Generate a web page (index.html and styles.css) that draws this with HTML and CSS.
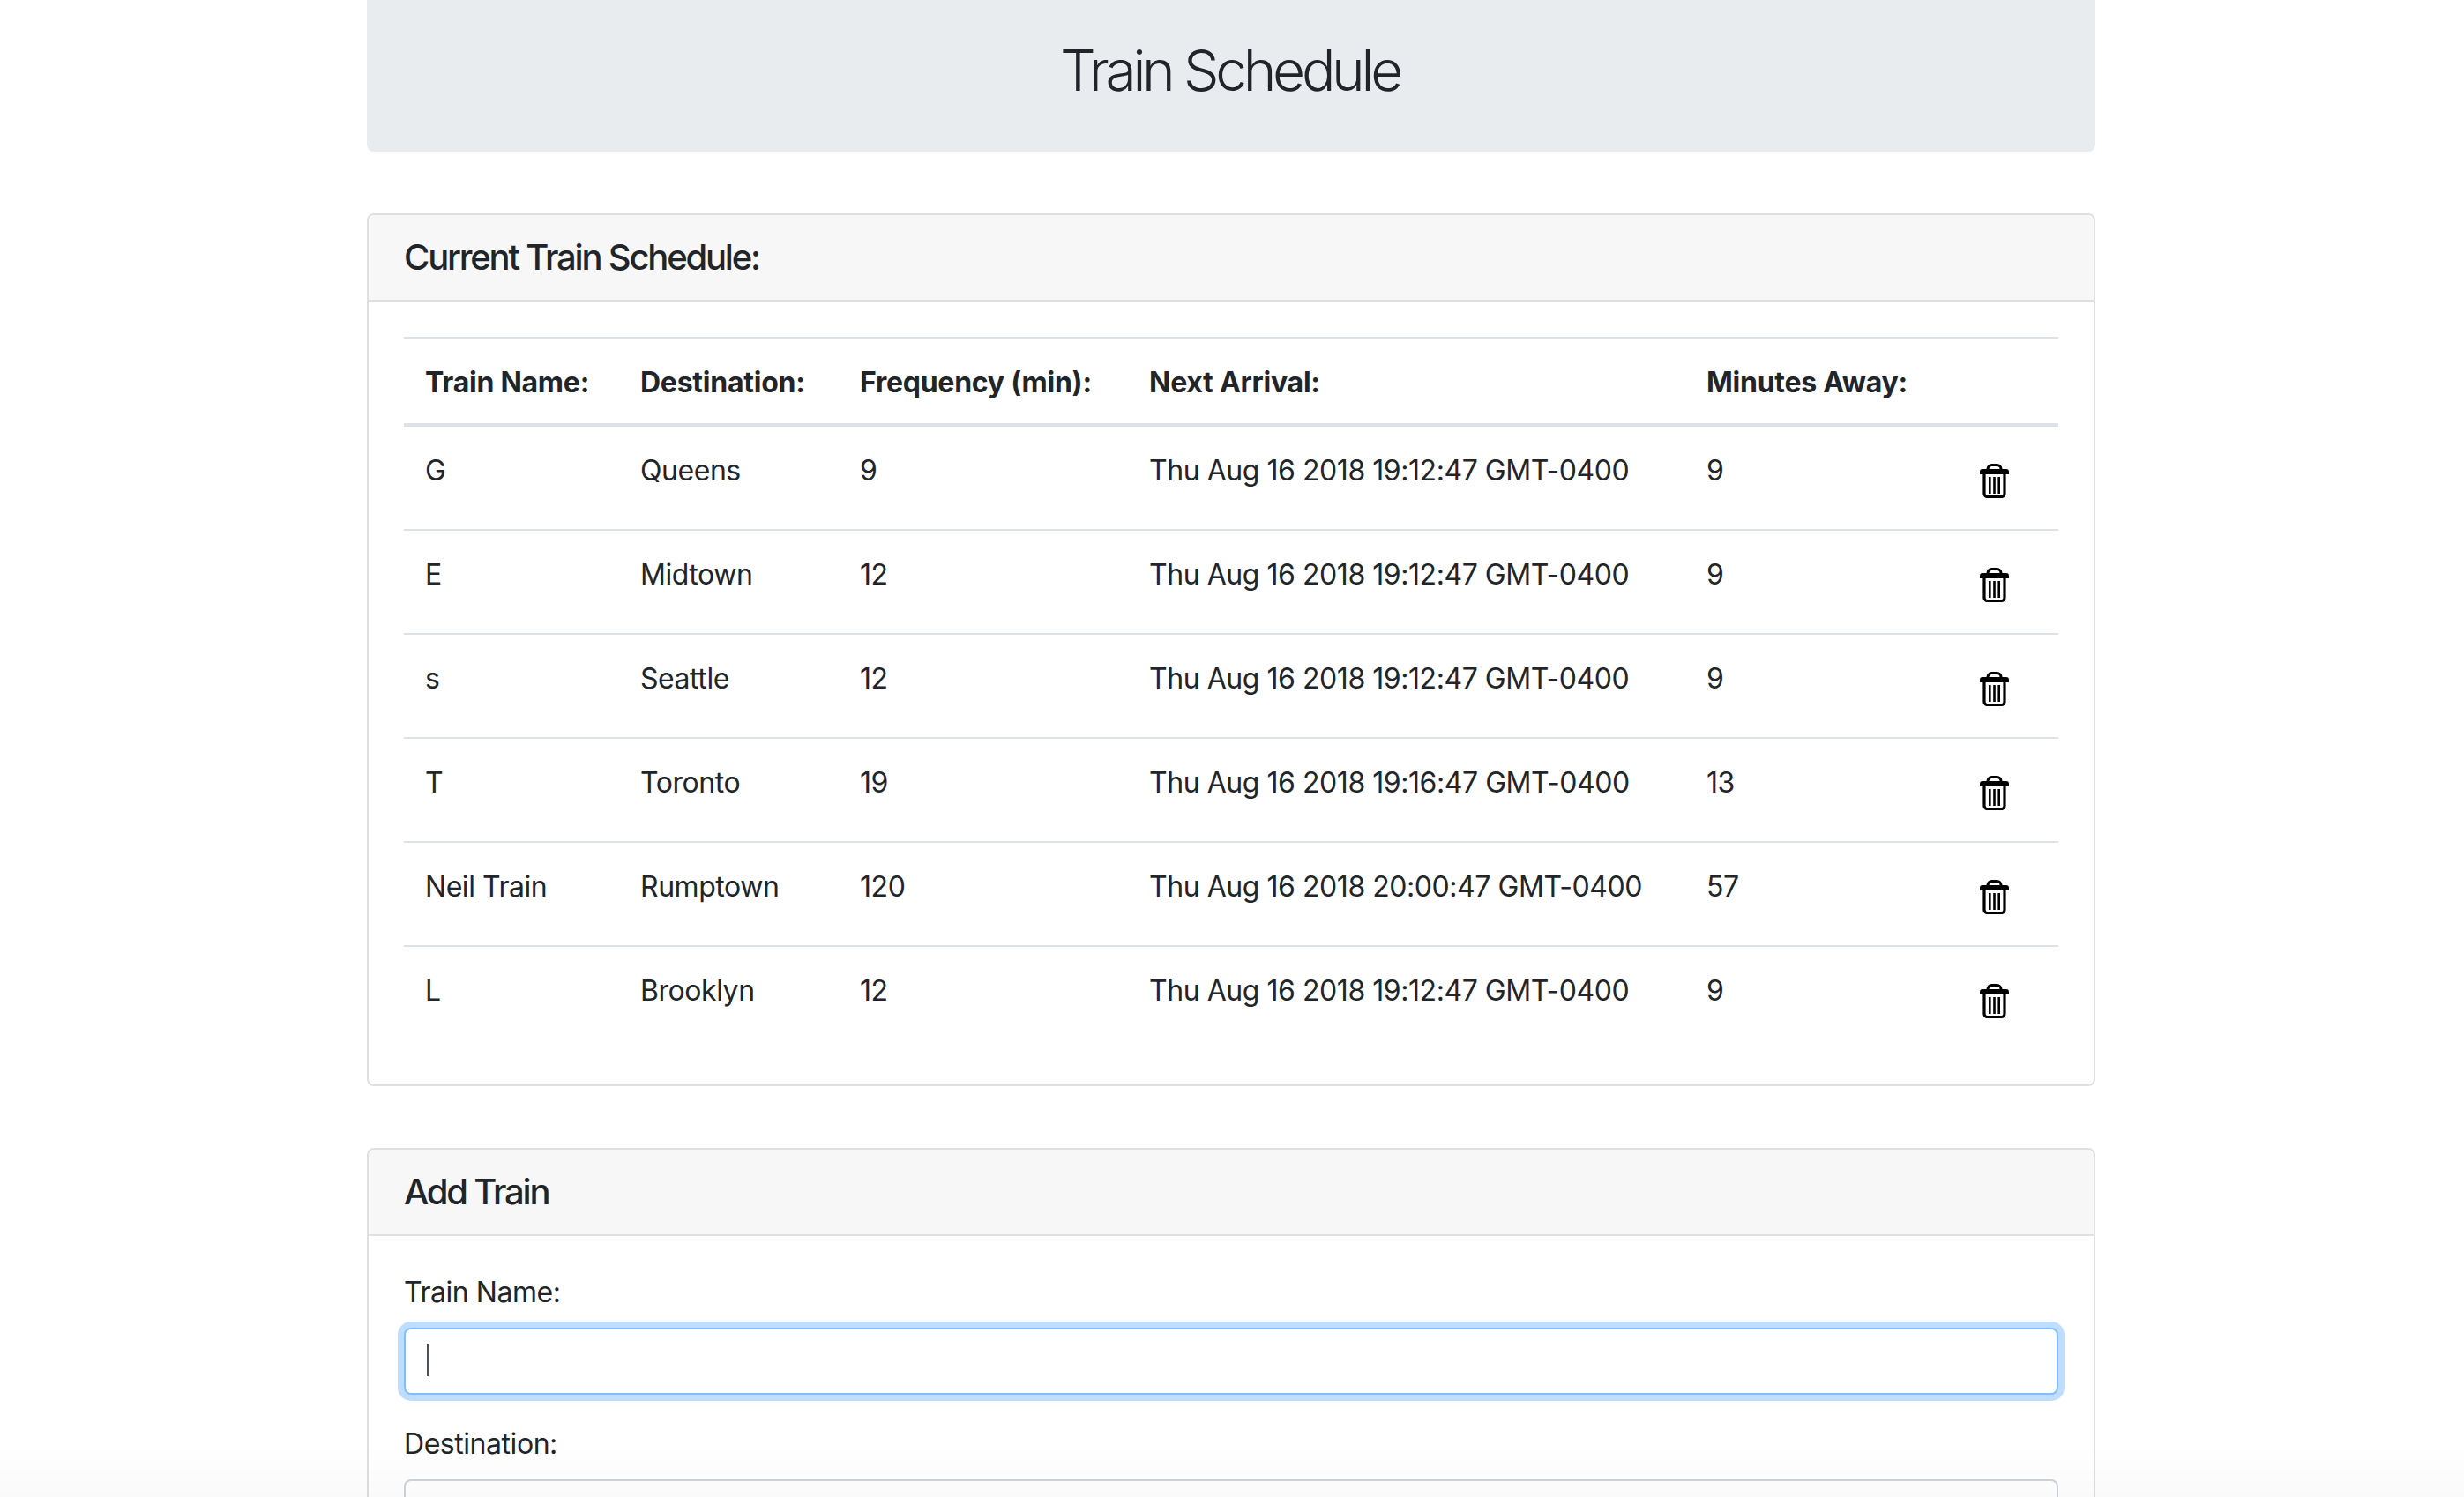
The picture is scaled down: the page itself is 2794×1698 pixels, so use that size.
FILE: index.html
```html
<!DOCTYPE html>
<html lang="en">
<head>
<meta charset="UTF-8" />
<title>Train Schedule</title>
<link rel="stylesheet" href="styles.css">
</head>
<body>

<svg class="sprite" width="0" height="0">
  <symbol id="trash" viewBox="0 0 33 39">
    <path d="M9 8V6a4.500 4.500 0 0 1 4.500-4.500h6A4.500 4.500 0 0 1 24 6v2" fill="none" stroke="currentColor" stroke-width="3" />
    <path d="M3 6h27a3 3 0 0 1 3 3v3H0V9a3 3 0 0 1 3-3z" fill="currentColor" />
    <path d="M5 11v23a3.500 3.500 0 0 0 3.500 3.500h16a3.500 3.500 0 0 0 3.500-3.500V11" fill="none" stroke="currentColor" stroke-width="3.200" />
    <path d="M10 15h2.600v19H10zM15.200 15h2.600v19h-2.600zM20.400 15h2.600v19h-2.600z" fill="currentColor" />
  </symbol>
</svg>

<div class="container">
  <div class="jumbotron">
    <h2>Train Schedule</h2>
  </div>

  <div class="card schedule">
    <h5 class="card-header">Current Train Schedule:</h5>
    <div class="card-body">
      <table>
        <thead>
          <tr>
            <th class="col-name">Train Name:</th>
            <th class="col-dest">Destination:</th>
            <th class="col-freq">Frequency (min):</th>
            <th class="col-next">Next Arrival:</th>
            <th class="col-away">Minutes Away:</th>
            <th></th>
          </tr>
        </thead>
        <tbody>
          <tr>
            <td>G</td><td>Queens</td><td>9</td><td>Thu Aug 16 2018 19:12:47 GMT-0400</td><td>9</td>
            <td class="trash-cell"><svg class="trash"><use href="#trash" /></svg></td>
          </tr>
          <tr>
            <td>E</td><td>Midtown</td><td>12</td><td>Thu Aug 16 2018 19:12:47 GMT-0400</td><td>9</td>
            <td class="trash-cell"><svg class="trash"><use href="#trash" /></svg></td>
          </tr>
          <tr>
            <td>s</td><td>Seattle</td><td>12</td><td>Thu Aug 16 2018 19:12:47 GMT-0400</td><td>9</td>
            <td class="trash-cell"><svg class="trash"><use href="#trash" /></svg></td>
          </tr>
          <tr>
            <td>T</td><td>Toronto</td><td>19</td><td>Thu Aug 16 2018 19:16:47 GMT-0400</td><td>13</td>
            <td class="trash-cell"><svg class="trash"><use href="#trash" /></svg></td>
          </tr>
          <tr>
            <td>Neil Train</td><td>Rumptown</td><td>120</td><td>Thu Aug 16 2018 20:00:47 GMT-0400</td><td>57</td>
            <td class="trash-cell"><svg class="trash"><use href="#trash" /></svg></td>
          </tr>
          <tr>
            <td>L</td><td>Brooklyn</td><td>12</td><td>Thu Aug 16 2018 19:12:47 GMT-0400</td><td>9</td>
            <td class="trash-cell"><svg class="trash"><use href="#trash" /></svg></td>
          </tr>
        </tbody>
      </table>
    </div>
  </div>

  <div class="card">
    <h5 class="card-header">Add Train</h5>
    <div class="card-body">
      <div class="form-group">
        <label for="train-name">Train Name:</label>
        <div class="field">
          <input id="train-name" class="form-control focused" type="text" />
          <span class="caret"></span>
        </div>
      </div>
      <div class="form-group">
        <label for="destination">Destination:</label>
        <div class="field">
          <input id="destination" class="form-control" type="text" />
        </div>
      </div>
    </div>
  </div>
</div>

<div class="bottom-fade"></div>

</body>
</html>
```

FILE: styles.css
```css
html, body {
  height: 100%;
  overflow: hidden;
}
body {
  margin: 0;
  padding-right: 2px;
  font-family: Inter, "Noto Sans", sans-serif;
  font-size: 32px;
  line-height: 48px;
  color: #212529;
  background: #fff;
  letter-spacing: -0.45px;
}
.sprite {
  position: absolute;
}
.container {
  width: 1960px;
  margin: 0 auto;
}
.jumbotron {
  background: #e9ecef;
  border-radius: 0 0 8px 8px;
  padding: 41px 3px 54px 0;
  margin-bottom: 70px;
  text-align: center;
}
h2 {
  margin: 0;
  font-size: 64px;
  font-weight: 300;
  line-height: 77px;
  letter-spacing: -4.3px;
}
.card {
  border: 2px solid #dfdfdf;
  border-radius: 8px;
  margin-bottom: 70px;
}
.card-header {
  margin: 0;
  padding: 24px 40px;
  background: #f7f7f7;
  border-bottom: 2px solid #dfdfdf;
  border-radius: 6px 6px 0 0;
  font-size: 40px;
  font-weight: 500;
  line-height: 48px;
  letter-spacing: -2.2px;
}
.card-body {
  padding: 40px;
}
.schedule .card-body {
  padding-bottom: 39px;
}
table {
  width: 100%;
  border-collapse: collapse;
  table-layout: fixed;
}
th {
  box-sizing: border-box;
  padding: 26px 24px 22px;
  text-align: left;
  font-weight: 700;
  white-space: nowrap;
  letter-spacing: -0.25px;
  border-top: 2px solid #dee2e6;
  border-bottom: 4px solid #dee2e6;
}
td {
  height: 118px;
  padding: 26px 24px 22px;
  box-sizing: border-box;
  vertical-align: top;
  border-top: 2px solid #dee2e6;
}
tbody tr:first-child td {
  height: 119px;
  border-top: 0;
}
.col-name { width: 244px; }
.col-dest { width: 249px; }
.col-freq { width: 328px; }
.col-next { width: 632px; }
.col-away { width: 273px; }
td.trash-cell {
  padding: 42px 0 0 61px;
}
.trash {
  display: block;
  width: 33px;
  height: 39px;
  color: #000;
}
.form-group {
  margin-bottom: 32px;
}
label {
  display: block;
  margin-bottom: 16px;
}
.field {
  position: relative;
}
.form-control {
  display: block;
  width: 100%;
  height: 76px;
  box-sizing: border-box;
  padding: 12px 24px;
  border: 2px solid #ced4da;
  border-radius: 8px;
  background: #fff;
  outline: 0;
  font: inherit;
}
.form-control.focused {
  border-color: #80bdff;
  box-shadow: 0 0 0 7px rgba(0, 123, 255, 0.25);
}
.caret {
  position: absolute;
  left: 26px;
  top: 19px;
  width: 2px;
  height: 36px;
  background: #495057;
}
.bottom-fade {
  position: fixed;
  left: 0;
  right: 0;
  bottom: 0;
  height: 60px;
  background: linear-gradient(rgba(0, 0, 0, 0), rgba(0, 0, 0, 0.02));
  pointer-events: none;
}
```
